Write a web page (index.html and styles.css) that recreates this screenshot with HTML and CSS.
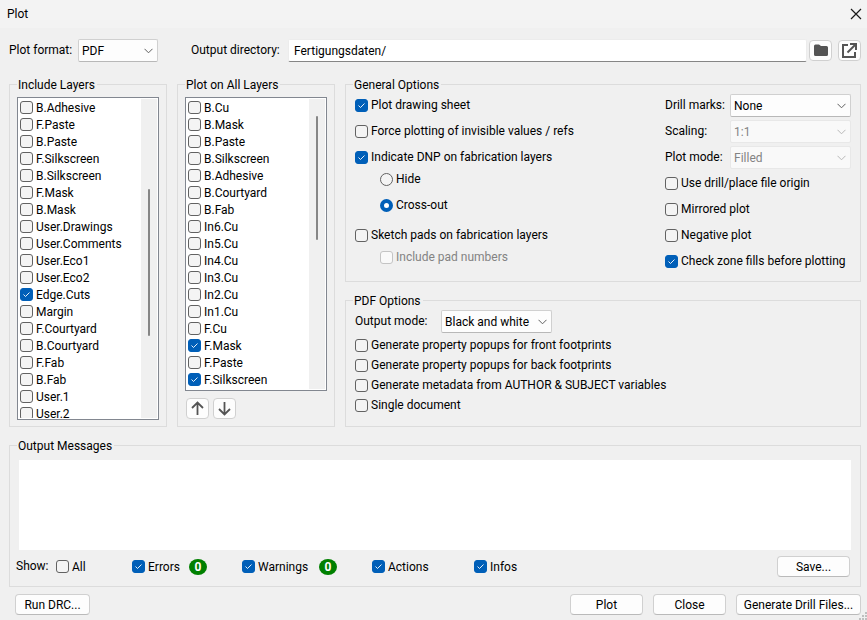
FILE: index.html
```html
<!DOCTYPE html>
<html lang="en">
<head>
<meta charset="utf-8">
<title>Plot</title>
<link rel="stylesheet" href="styles.css">
</head>
<body>
<header class="titlebar">
  <h1>Plot</h1>
  <button class="close" type="button" aria-label="Close window"><svg width="12" height="12" viewBox="0 0 12 12"><path d="M1 1l10 10M11 1L1 11" fill="none" stroke="#1a1a1a" stroke-width="1.2"/></svg></button>
</header>

<div class="toolbar">
  <label for="format">Plot format:</label>
  <select id="format" class="format"><option>PDF</option></select>
  <label for="dir" class="dir-label">Output directory:</label>
  <input id="dir" class="dir" type="text" value="Fertigungsdaten/">
  <button class="icon" type="button" aria-label="Browse"><svg width="16" height="14" viewBox="0 0 16 14"><path d="M1 2Q1 .5 2.500 .5H6L8 2H13.500Q15 2 15 3.500V10.500Q15 12 13.500 12H2.500Q1 12 1 10.500Z" fill="#545454"/></svg></button>
  <button class="icon last" type="button" aria-label="Open in file manager"><svg width="17" height="17" viewBox="0 0 17 17"><path d="M7 3H2V15H14V10" fill="none" stroke="#545454" stroke-width="2"/><path d="M6.500 10.500L14 3" fill="none" stroke="#545454" stroke-width="2"/><path d="M9 1H16V8H14V3H9Z" fill="#545454"/></svg></button>
</div>

<main class="main">
  <fieldset class="group layers">
    <legend>Include Layers</legend>
    <div class="listbox">
      <ul>
        <li><label><input type="checkbox">B.Adhesive</label></li>
        <li><label><input type="checkbox">F.Paste</label></li>
        <li><label><input type="checkbox">B.Paste</label></li>
        <li><label><input type="checkbox">F.Silkscreen</label></li>
        <li><label><input type="checkbox">B.Silkscreen</label></li>
        <li><label><input type="checkbox">F.Mask</label></li>
        <li><label><input type="checkbox">B.Mask</label></li>
        <li><label><input type="checkbox">User.Drawings</label></li>
        <li><label><input type="checkbox">User.Comments</label></li>
        <li><label><input type="checkbox">User.Eco1</label></li>
        <li><label><input type="checkbox">User.Eco2</label></li>
        <li><label><input type="checkbox" checked>Edge.Cuts</label></li>
        <li><label><input type="checkbox">Margin</label></li>
        <li><label><input type="checkbox">F.Courtyard</label></li>
        <li><label><input type="checkbox">B.Courtyard</label></li>
        <li><label><input type="checkbox">F.Fab</label></li>
        <li><label><input type="checkbox">B.Fab</label></li>
        <li><label><input type="checkbox">User.1</label></li>
        <li><label><input type="checkbox">User.2</label></li>
      </ul>
      <div class="scroll"><div class="thumb thumb-include"></div></div>
    </div>
  </fieldset>

  <fieldset class="group layers">
    <legend>Plot on All Layers</legend>
    <div class="listbox">
      <ul>
        <li><label><input type="checkbox">B.Cu</label></li>
        <li><label><input type="checkbox">B.Mask</label></li>
        <li><label><input type="checkbox">B.Paste</label></li>
        <li><label><input type="checkbox">B.Silkscreen</label></li>
        <li><label><input type="checkbox">B.Adhesive</label></li>
        <li><label><input type="checkbox">B.Courtyard</label></li>
        <li><label><input type="checkbox">B.Fab</label></li>
        <li><label><input type="checkbox">In6.Cu</label></li>
        <li><label><input type="checkbox">In5.Cu</label></li>
        <li><label><input type="checkbox">In4.Cu</label></li>
        <li><label><input type="checkbox">In3.Cu</label></li>
        <li><label><input type="checkbox">In2.Cu</label></li>
        <li><label><input type="checkbox">In1.Cu</label></li>
        <li><label><input type="checkbox">F.Cu</label></li>
        <li><label><input type="checkbox" checked>F.Mask</label></li>
        <li><label><input type="checkbox">F.Paste</label></li>
        <li><label><input type="checkbox" checked>F.Silkscreen</label></li>
      </ul>
      <div class="scroll"><div class="thumb thumb-all"></div></div>
    </div>
    <div class="movers">
      <button class="icon" type="button" aria-label="Move up"><svg width="15" height="15" viewBox="0 0 15 15"><path d="M7.500 14V2M2 7L7.500 1.500L13 7" fill="none" stroke="#545454" stroke-width="1.800"/></svg></button>
      <button class="icon" type="button" aria-label="Move down"><svg width="15" height="15" viewBox="0 0 15 15"><path d="M7.500 1V13M2 8L7.500 13.500L13 8" fill="none" stroke="#545454" stroke-width="1.800"/></svg></button>
    </div>
  </fieldset>

  <div class="options">
    <fieldset class="group wide">
      <legend>General Options</legend>
      <div class="general">
        <div class="checks">
          <label class="check"><input type="checkbox" checked>Plot drawing sheet</label>
          <label class="check"><input type="checkbox">Force plotting of invisible values / refs</label>
          <div class="nest">
            <label class="check"><input type="checkbox" checked>Indicate DNP on fabrication layers</label>
            <div class="checks sub">
              <label class="check"><input type="radio" name="dnp">Hide</label>
              <label class="check"><input type="radio" name="dnp" checked>Cross-out</label>
            </div>
          </div>
          <div class="nest spaced">
            <label class="check"><input type="checkbox">Sketch pads on fabrication layers</label>
            <div class="checks sub">
              <label class="check off"><input type="checkbox" disabled>Include pad numbers</label>
            </div>
          </div>
        </div>
        <div class="right">
          <div class="fields">
            <label for="drill">Drill marks:</label>
            <select id="drill"><option>None</option></select>
            <label for="scaling">Scaling:</label>
            <select id="scaling" disabled><option>1:1</option></select>
            <label for="mode">Plot mode:</label>
            <select id="mode" disabled><option>Filled</option></select>
          </div>
          <div class="checks">
            <label class="check"><input type="checkbox">Use drill/place file origin</label>
            <label class="check"><input type="checkbox">Mirrored plot</label>
            <label class="check"><input type="checkbox">Negative plot</label>
            <label class="check"><input type="checkbox" checked>Check zone fills before plotting</label>
          </div>
        </div>
      </div>
    </fieldset>

    <fieldset class="group wide pdf">
      <legend>PDF Options</legend>
      <div class="mode-row">
        <label for="output">Output mode:</label>
        <select id="output"><option>Black and white</option></select>
      </div>
      <div class="checks tight">
        <label class="check"><input type="checkbox">Generate property popups for front footprints</label>
        <label class="check"><input type="checkbox">Generate property popups for back footprints</label>
        <label class="check"><input type="checkbox">Generate metadata from AUTHOR &amp; SUBJECT variables</label>
        <label class="check"><input type="checkbox">Single document</label>
      </div>
    </fieldset>
  </div>
</main>

<fieldset class="group messages">
  <legend>Output Messages</legend>
  <textarea class="log" aria-label="Output Messages" readonly></textarea>
  <div class="filters">
    <span>Show:</span>
    <label class="check"><input type="checkbox">All</label>
    <label class="check"><input type="checkbox" checked>Errors</label>
    <span class="badge">0</span>
    <label class="check"><input type="checkbox" checked>Warnings</label>
    <span class="badge">0</span>
    <label class="check"><input type="checkbox" checked>Actions</label>
    <label class="check"><input type="checkbox" checked>Infos</label>
    <button class="btn" type="button">Save...</button>
  </div>
</fieldset>

<footer class="footer">
  <button class="btn drc" type="button">Run DRC...</button>
  <button class="btn" type="button">Plot</button>
  <button class="btn" type="button">Close</button>
  <button class="btn drill" type="button">Generate Drill Files...</button>
</footer>
<svg class="grip" width="8" height="8" viewBox="0 0 8 8" aria-hidden="true"><path d="M0 6h2v2H0zM3 6h2v2H3zM6 6h2v2H6zM3 3h2v2H3zM6 3h2v2H6zM6 0h2v2H6z" fill="#bfbfbf"/></svg>
</body>
</html>
```
FILE: styles.css
```css
* { box-sizing: border-box; }

body {
  margin: 0;
  height: 100vh;
  display: flex;
  flex-direction: column;
  background: #f0f0f0;
  color: #000;
  font: 12px/17px Roboto, "Open Sans", sans-serif;
  white-space: nowrap;
  overflow: hidden;
}

button, input, select, textarea { font: inherit; color: inherit; margin: 0; }

.titlebar {
  display: flex;
  align-items: center;
  justify-content: space-between;
  height: 28px;
  padding: 0 5px 0 7px;
  background: #f3f3f3;
}
.titlebar h1 { margin: 0; font-size: 12px; font-weight: 400; }
.close { display: flex; padding: 0; border: 0; background: none; }

/* Form controls */
select {
  appearance: none;
  height: 23px;
  min-width: 0;
  padding: 1px 16px 0 3px;
  border: 1px solid #d0d0d0;
  border-bottom-color: #b8b8b8;
  border-radius: 2px;
  background: #fdfdfd url("data:image/svg+xml,%3Csvg xmlns='http://www.w3.org/2000/svg' width='9' height='6'%3E%3Cpath d='M.5 .8l4 4 4-4' fill='none' stroke='%23606060'/%3E%3C/svg%3E") no-repeat right 4px center;
}
select:disabled {
  opacity: 1;
  color: #838383;
  border-color: #e8e8e8;
  background-color: #f9f9f9;
  background-image: url("data:image/svg+xml,%3Csvg xmlns='http://www.w3.org/2000/svg' width='9' height='6'%3E%3Cpath d='M.5 .8l4 4 4-4' fill='none' stroke='%23b8b8b8'/%3E%3C/svg%3E");
}

input[type="checkbox"], input[type="radio"] {
  appearance: none;
  flex: none;
  width: 13px;
  height: 13px;
  margin: 0 3px 1px 0;
  border: 1px solid #626262;
  border-radius: 3px;
  background: #f4f4f4;
}
input[type="checkbox"]:checked {
  border-color: #005fb8;
  background: #005fb8 url("data:image/svg+xml,%3Csvg xmlns='http://www.w3.org/2000/svg' width='11' height='11'%3E%3Cpath d='M2.500 5.500l2 2 4-4' fill='none' stroke='%23fff' stroke-width='.9'/%3E%3C/svg%3E") no-repeat center;
}
input[type="radio"] { border-radius: 50%; }
input[type="radio"]:checked {
  border: 4px solid #005fb8;
  background: #fff;
}
input:disabled { border-color: #c4c4c4 !important; background: #f9f9f9; }

.btn {
  height: 21px;
  width: 73px;
  padding: 1px 0 0;
  border: 1px solid #d0d0d0;
  border-bottom-color: #bababa;
  border-radius: 4px;
  background: #fdfdfd;
}
.icon {
  display: flex;
  align-items: center;
  justify-content: center;
  flex: none;
  width: 23px;
  height: 21px;
  padding: 0;
  border: 1px solid #d0d0d0;
  border-radius: 4px;
  background: #fdfdfd;
}

/* Top row */
.toolbar {
  display: flex;
  align-items: center;
  padding: 11px 6px 14px 9px;
}
.toolbar label { flex: none; width: 69px; }
.format { width: 80px; }
.toolbar .dir-label { width: 97px; margin-left: 33px; }
.dir {
  flex: 1;
  min-width: 0;
  height: 23px;
  padding: 0 5px;
  margin-right: 2px;
  border: 1px solid #ececec;
  border-bottom-color: #868686;
  border-radius: 2px;
  background: #fff;
}
.icon.last { margin-left: 6px; }

/* Group boxes */
.group {
  min-width: 0;
  margin: 0;
  padding: 4px 7px 6px;
  border: 1px solid #dcdcdc;
}
legend { padding: 1px 2px 0 1px; line-height: 16px; }

.main {
  flex: 1;
  min-height: 0;
  display: grid;
  grid-template-columns: 158px 158px 1fr;
  grid-template-rows: minmax(0, 1fr);
  gap: 10px;
  margin: 0 6px 0 9px;
}
.layers {
  display: flex;
  flex-direction: column;
  min-height: 0;
}
.listbox {
  flex: 1;
  min-height: 0;
  display: flex;
  padding: 1px;
  border: 1px solid #828790;
  background: #fff;
}
.listbox ul {
  flex: 1;
  min-width: 0;
  margin: 0;
  padding: 0 0 0 1px;
  list-style: none;
  overflow: hidden;
}
.listbox label { display: flex; align-items: center; height: 17px; padding-top: 1px; }
.scroll { width: 16px; background: #f0f0f0; }
.thumb { width: 2px; margin-left: 7px; border-radius: 1px; background: #868686; }
.thumb-include { height: 147px; margin-top: 90px; }
.thumb-all { height: 124px; margin-top: 17px; }
.movers { display: flex; gap: 4px; padding: 7px 0 1px 1px; }

.options { display: flex; flex-direction: column; gap: 10px; min-width: 0; }
.wide { padding: 1px 9px 11px; }
.wide legend { margin-left: -2px; }
.pdf { flex: 1; }

.general { display: flex; justify-content: space-between; }
.checks { display: flex; flex-direction: column; align-items: flex-start; gap: 8px; }
.general > .checks { padding-top: 2px; }
.check { display: flex; align-items: center; height: 18px; padding-top: 1px; }
.off { color: #838383; }
.nest { display: flex; flex-direction: column; gap: 4px; }
.spaced { margin-top: 4px; }
.sub { padding-left: 25px; }
.right { width: 186px; display: flex; flex-direction: column; gap: 5px; }
.fields {
  display: grid;
  grid-template-columns: 65px 1fr;
  gap: 3px 0;
  align-items: center;
}
.mode-row { display: flex; align-items: center; margin-bottom: 3px; }
.mode-row label { width: 86px; }
.mode-row select { width: 111px; }
.tight { gap: 2px; }

/* Messages */
.messages { margin: 10px 6px 0 9px; padding: 6px 9px 9px; }
.messages legend { margin-left: -2px; }
.log {
  display: block;
  width: 100%;
  height: 90px;
  padding: 4px;
  border: 0;
  resize: none;
  background: #fff;
}
.filters {
  display: grid;
  grid-template-columns: 40px 76px 57px 53px 77px 53px 102px 1fr 73px;
  align-items: center;
  margin: 6px 1px 0 -3px;
}
.badge {
  width: 18px;
  height: 16px;
  border-radius: 50%;
  background: #008000;
  color: #fff;
  font-weight: 700;
  line-height: 16px;
  text-align: center;
}

.footer { display: flex; gap: 10px; padding: 7px 6px 5px 15px; }
.drc { width: 75px; margin-right: auto; }
.drill { width: 125px; }
.grip { position: absolute; right: 0; bottom: 0; }
```
